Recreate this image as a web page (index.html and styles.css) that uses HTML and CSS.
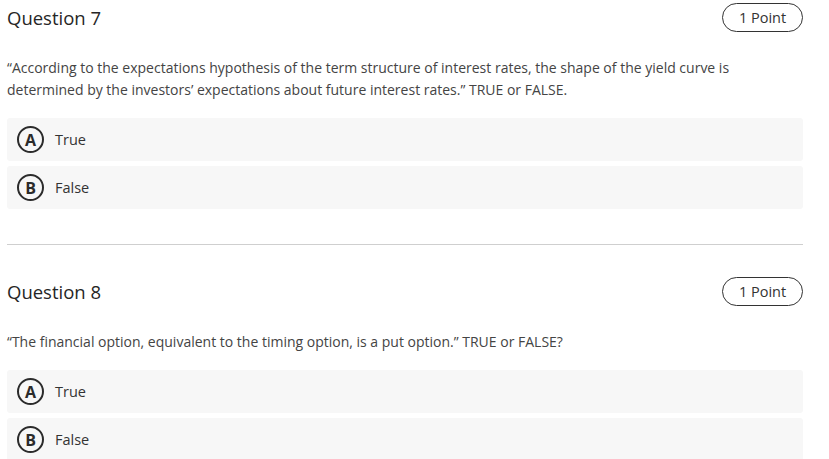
FILE: index.html
```html
<!DOCTYPE html>
<html>
<head>
<meta charset="utf-8">
<link rel="stylesheet" href="styles.css">
</head>
<body>
<div class="page">
  <section class="question">
    <div class="q-header">
      <h2 class="q-title">Question 7</h2>
      <span class="points">1 Point</span>
    </div>
    <p class="q-text">“According to the expectations hypothesis of the term structure of interest rates, the shape of the yield curve is determined by the investors’ expectations about future interest rates.” TRUE or FALSE.</p>
    <div class="options">
      <div class="option"><span class="letter">A</span><span class="label">True</span></div>
      <div class="option"><span class="letter">B</span><span class="label">False</span></div>
    </div>
  </section>
  <hr class="divider">
  <section class="question">
    <div class="q-header">
      <h2 class="q-title">Question 8</h2>
      <span class="points">1 Point</span>
    </div>
    <p class="q-text">“The financial option, equivalent to the timing option, is a put option.” TRUE or FALSE?</p>
    <div class="options">
      <div class="option"><span class="letter">A</span><span class="label">True</span></div>
      <div class="option"><span class="letter">B</span><span class="label">False</span></div>
    </div>
  </section>
</div>
</body>
</html>
```
FILE: styles.css
```css
html, body {
  margin: 0;
  padding: 0;
  background: #ffffff;
}
body {
  font-family: "Open Sans", "Noto Sans", sans-serif;
  color: #333333;
}
.page {
  padding: 3px 26px 0 7px;
}
.q-header {
  display: flex;
  align-items: center;
  justify-content: space-between;
  height: 29px;
}
.q-title {
  margin: 0;
  font-size: 18.5px;
  font-weight: 400;
  color: #262626;
  line-height: 24px;
}
.points {
  display: inline-flex;
  align-items: center;
  justify-content: center;
  box-sizing: border-box;
  width: 81px;
  height: 29px;
  border: 1px solid #333;
  border-radius: 15px;
  font-size: 14.5px;
  color: #333;
}
.q-text {
  margin: 25px 0 17px 0;
  font-size: 14px;
  line-height: 22px;
  color: #444;
  max-width: 760px;
}
.options {
  display: flex;
  flex-direction: column;
  gap: 5px;
}
.option {
  display: flex;
  align-items: center;
  height: 43px;
  background: #f7f7f7;
  border-radius: 3px;
  padding-left: 10px;
  gap: 11px;
}
.letter {
  display: inline-flex;
  align-items: center;
  justify-content: center;
  box-sizing: border-box;
  width: 27px;
  height: 27px;
  border: 2px solid #2b2b2b;
  border-radius: 50%;
  font-size: 16px;
  font-weight: 700;
  color: #2b2b2b;
}
.label {
  font-size: 14.5px;
  color: #333;
}
.divider {
  border: 0;
  border-top: 1px solid #cfcfcf;
  margin: 35px 0 32px 0;
  height: 0;
}
```
